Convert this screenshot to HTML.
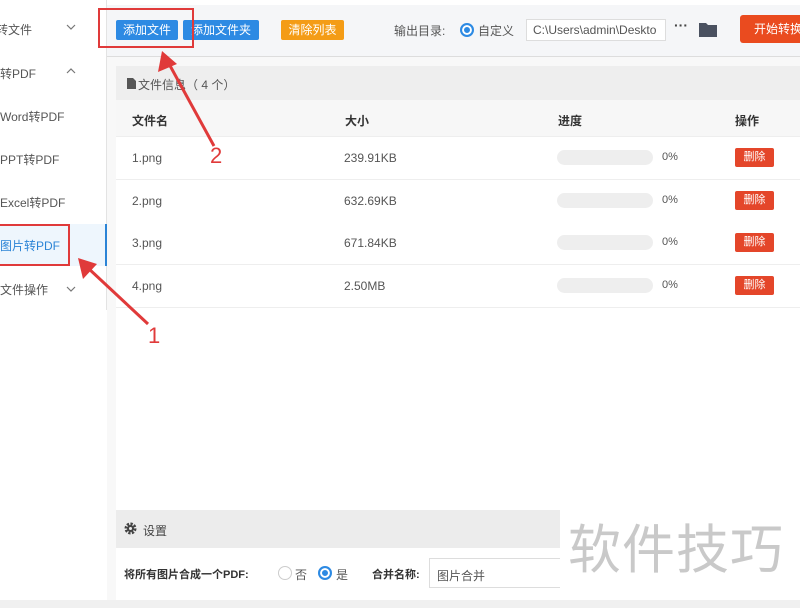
<html><head><style>
body{margin:0;width:800px;height:608px;overflow:hidden;position:relative;background:#fff;font-family:"Liberation Sans","Noto Sans CJK SC",sans-serif;font-size:12px;color:#333}
.a{position:absolute}
.side{left:0;top:0;width:106px;height:310px;background:#fff;border-right:1px solid #e3e3e3}
.si{position:absolute;left:0;font-size:12px;color:#555}
.btn{position:absolute;top:20px;height:20px;line-height:20px;color:#fff;font-size:12px;text-align:center;border-radius:2px}
.row{position:absolute;left:116px;width:684px;height:42px;background:#fff;border-bottom:1px solid #eee}
.row span{position:absolute;top:14px;font-size:12px;color:#555}
.bar{position:absolute;left:441px;top:13px;width:96px;height:15px;background:#eee;border-radius:8px}
.del{position:absolute;left:619px;top:11px;width:39px;height:19px;background:#e4462a;color:#fff;font-size:11px;line-height:19px;text-align:center;border-radius:2px}
.chev{position:absolute;left:66px}
</style></head><body>
<div class="a" style="left:107px;top:56px;width:693px;height:544px;background:#f8f8f8"></div>
<div class="a side">
<div class="si" style="top:21px;left:-4px">转文件</div><svg class="chev" style="top:24px" width="10" height="6"><path d="M1 1l4 4 4-4" stroke="#777" fill="none" stroke-width="1.2"/></svg>
<div class="si" style="top:65px">转PDF</div><svg class="chev" style="top:68px" width="10" height="6"><path d="M1 5l4-4 4 4" stroke="#777" fill="none" stroke-width="1.2"/></svg>
<div class="si" style="top:108px">Word转PDF</div>
<div class="si" style="top:151px">PPT转PDF</div>
<div class="si" style="top:194px">Excel转PDF</div>
<div class="a" style="left:0;top:224px;width:107px;height:42px;background:#eef6fd;border-right:2px solid #2b84d6;box-sizing:border-box"></div>
<div class="si" style="top:237px;color:#2b84d6">图片转PDF</div>
<div class="si" style="top:281px">文件操作</div><svg class="chev" style="top:286px" width="10" height="6"><path d="M1 1l4 4 4-4" stroke="#777" fill="none" stroke-width="1.2"/></svg>
</div>
<div class="a" style="left:107px;top:5px;width:693px;height:51px;background:#f5f6f8;border-bottom:1px solid #ddd"></div>
<div class="btn" style="left:116px;width:62px;background:#2d8ae3">添加文件</div>
<div class="btn" style="left:183px;width:76px;background:#2d8ae3">添加文件夹</div>
<div class="btn" style="left:281px;width:63px;background:#f49c16">清除列表</div>
<div class="a" style="left:394px;top:22px;color:#555">输出目录:</div>
<div class="a" style="left:460px;top:23px;width:10px;height:10px;border:2px solid #2d8ae3;border-radius:50%;background:#2d8ae3;box-shadow:inset 0 0 0 2px #fff"></div>
<div class="a" style="left:478px;top:22px;color:#555">自定义</div>
<div class="a" style="left:526px;top:19px;width:140px;height:22px;background:#fff;border:1px solid #ddd;box-sizing:border-box;padding:3px 6px;color:#555;font-size:12px;white-space:nowrap;overflow:hidden">C:\Users\admin\Deskto</div>
<div class="a" style="left:674px;top:17px;color:#444;font-weight:bold;font-size:14px">···</div>
<svg class="a" style="left:699px;top:22px" width="18" height="15"><path d="M0 1h7l2 2h9v12H0z" fill="#4a5160"/></svg>
<div class="a" style="left:740px;top:15px;width:70px;height:28px;background:#ea4b1f;border-radius:3px;color:#fff;line-height:28px;padding-left:14px;box-sizing:border-box">开始转换</div>
<div class="a" style="left:116px;top:66px;width:684px;height:444px;background:#fff"></div>
<div class="a" style="left:116px;top:66px;width:684px;height:34px;background:#eeeeee"></div>
<svg class="a" style="left:127px;top:78px" width="9" height="11"><path d="M0 0h6l3 3v8H0z" fill="#555"/></svg>
<div class="a" style="left:138px;top:76px;color:#555">文件信息（ 4 个）</div>
<div class="a" style="left:116px;top:100px;width:684px;height:36px;background:#f7f7f7;border-bottom:1px solid #eee"></div>
<div class="a" style="left:132px;top:112px;font-weight:bold">文件名</div>
<div class="a" style="left:345px;top:112px;font-weight:bold">大小</div>
<div class="a" style="left:558px;top:112px;font-weight:bold">进度</div>
<div class="a" style="left:735px;top:112px;font-weight:bold">操作</div>
<div class="row" style="top:137px"><span style="left:16px">1.png</span><span style="left:228px">239.91KB</span><div class="bar"></div><span style="left:546px;font-size:11px">0%</span><div class="del">删除</div></div>
<div class="row" style="top:180px"><span style="left:16px">2.png</span><span style="left:228px">632.69KB</span><div class="bar"></div><span style="left:546px;font-size:11px">0%</span><div class="del">删除</div></div>
<div class="row" style="top:222px"><span style="left:16px">3.png</span><span style="left:228px">671.84KB</span><div class="bar"></div><span style="left:546px;font-size:11px">0%</span><div class="del">删除</div></div>
<div class="row" style="top:265px"><span style="left:16px">4.png</span><span style="left:228px">2.50MB</span><div class="bar"></div><span style="left:546px;font-size:11px">0%</span><div class="del">删除</div></div>
<div class="a" style="left:116px;top:510px;width:444px;height:38px;background:#ececec"></div>
<svg class="a" style="left:124px;top:522px" width="13" height="13" viewBox="0 0 13 13"><circle cx="6.5" cy="6.5" r="4.5" fill="none" stroke="#444" stroke-width="3" stroke-dasharray="2.2 1.3"/><circle cx="6.5" cy="6.5" r="3.5" fill="#444"/><circle cx="6.5" cy="6.5" r="1.5" fill="#ececec"/></svg>
<div class="a" style="left:143px;top:522px;color:#444">设置</div>
<div class="a" style="left:116px;top:548px;width:444px;height:52px;background:#fff"></div>
<div class="a" style="left:124px;top:566px;font-weight:bold;font-size:11px">将所有图片合成一个PDF:</div>
<div class="a" style="left:278px;top:566px;width:12px;height:12px;border:1px solid #ccc;border-radius:50%"></div>
<div class="a" style="left:295px;top:566px;color:#555">否</div>
<div class="a" style="left:318px;top:566px;width:10px;height:10px;border:2px solid #2d8ae3;border-radius:50%;background:#2d8ae3;box-shadow:inset 0 0 0 2px #fff"></div>
<div class="a" style="left:336px;top:566px;color:#555">是</div>
<div class="a" style="left:372px;top:566px;font-weight:bold;font-size:11px">合并名称:</div>
<div class="a" style="left:429px;top:558px;width:140px;height:30px;border:1px solid #ddd;background:#fff;padding:8px 7px;box-sizing:border-box;color:#555">图片合并</div>
<div class="a" style="left:560px;top:505px;width:240px;height:95px;background:#fff"></div>
<div class="a" style="left:568px;top:508px;font-size:53px;color:#c9c9c9;letter-spacing:1px;font-family:'Noto Sans CJK SC',sans-serif">软件技巧</div>
<div class="a" style="left:0;top:600px;width:800px;height:8px;background:#f0f0f0"></div>
<div class="a" style="left:98px;top:8px;width:96px;height:40px;border:2px solid #e03a3a;box-sizing:border-box"></div>
<div class="a" style="left:-3px;top:224px;width:73px;height:42px;border:2px solid #e03a3a;box-sizing:border-box"></div>
<svg class="a" style="left:0;top:0" width="800" height="608">
<line x1="214" y1="146" x2="168" y2="62" stroke="#e03a3a" stroke-width="3"/>
<polygon points="162,51 158,72 177,64" fill="#e03a3a"/>
<line x1="148" y1="324" x2="88" y2="268" stroke="#e03a3a" stroke-width="3"/>
<polygon points="78,258 83,279 97,264" fill="#e03a3a"/>
</svg>
<div class="a" style="left:210px;top:143px;font-size:22px;color:#e03a3a">2</div>
<div class="a" style="left:148px;top:323px;font-size:22px;color:#e03a3a">1</div>
</body></html>
